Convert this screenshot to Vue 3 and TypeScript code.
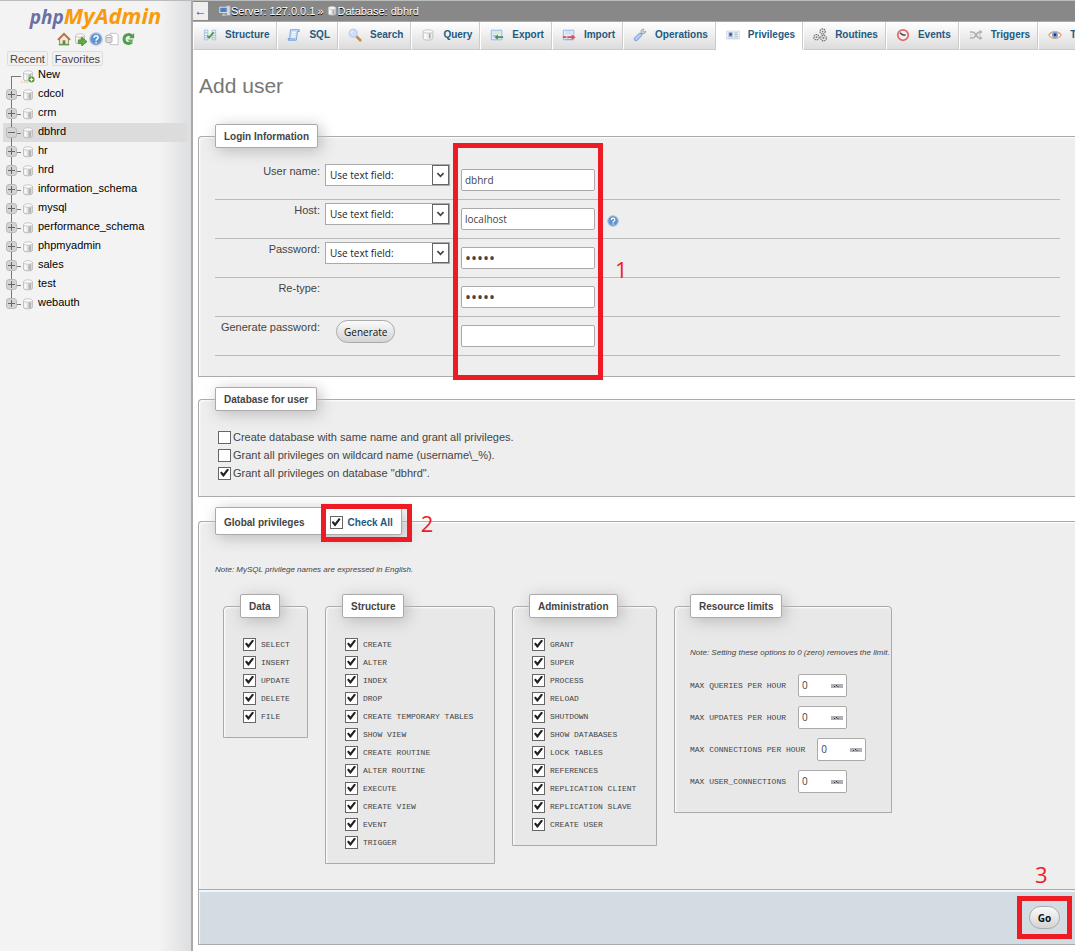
<script setup lang="ts">
import { reactive, ref, computed } from 'vue'

const db = `<path d="M3 4v8c0 2 10 2 10 0V4z" fill="#e4e4e4" stroke="#b5b5b5"/><path d="M8.5 5.500h3v7h-3z" fill="#b4b4b4"/><path d="M4 5h2v7H4z" fill="#fff"/><ellipse cx="8" cy="4" rx="5" ry="2" fill="#fafafa" stroke="#c4c4c4"/>`

const icons: Record<string, string> = {
  db,
  dbNew: db + `<circle cx="12" cy="12" r="3.500" fill="#5c9a3c"/><path d="M12 10v4M10 12h4" stroke="#fff" stroke-width="1.400"/><path d="M0 15h8" stroke="#e8c46a" stroke-dasharray="2 1"/>`,
  home: `<path d="M3 8v6h10V8L8 3z" fill="#f3ead8" stroke="#8d7b5c"/><path d="M1 9l7-7 7 7" fill="none" stroke="#b5733a" stroke-width="2"/><path d="M6.500 9.500h3V14h-3z" fill="#6b7b5a"/><path d="M2 14.500h12" stroke="#5b9a45" stroke-width="1.500"/>`,
  exit: db + `<path d="M6 9h4V6l6 5-6 5v-3H6z" fill="#62ad3b" stroke="#3c7a22" stroke-width=".8"/>`,
  help: `<circle cx="8" cy="8" r="7" fill="#5f94cf" stroke="#a9c3e2" stroke-width="1.500"/><path d="M5.800 6.500c0-3 4.600-3 4.600 0 0 1.700-2.300 1.500-2.300 3.400" fill="none" stroke="#fff" stroke-width="1.700"/><circle cx="8.100" cy="12" r="1" fill="#fff"/>`,
  docs: `<path d="M6 1.500h7l2 2v11H6z" fill="#fff" stroke="#bbb"/><path d="M1 5v6c0 1.500 7 1.500 7 0V5z" fill="#ddd" stroke="#aaa"/><ellipse cx="4.500" cy="5" rx="3.500" ry="1.500" fill="#f5f5f5" stroke="#aaa"/>`,
  reload: `<path d="M12.500 4.500c-3-3-9-1.500-9 3.500s5 6.500 9 3.500" fill="none" stroke="#4f9f4b" stroke-width="3.400"/><path d="M15 1v6H9z" fill="#4f9f4b"/><path d="M7 8.500h7l-2 5z" fill="#66b05e"/>`,
  server: `<path d="M10 1h5v13h-5z" fill="#d7d7d7" stroke="#999"/><path d="M1 3h10v7H1z" fill="#4e7fc4" stroke="#d5dce6" stroke-width="1.400"/><path d="M4 13.500h5M6.500 11v2" stroke="#ccc" stroke-width="1.500"/>`,
  structure: `<path d="M1.500 2.500h4v11h-4zM10.500 2.500h4v11h-4z" fill="#e8f1fb" stroke="#9dbfdf"/><path d="M1.500 5.500h4M1.500 8.500h4M1.500 11h4M10.500 5.500h4M10.500 8.500h4M10.500 11h4" stroke="#9dbfdf"/><path d="M5 9l2 2 5-6" fill="none" stroke="#4f9a42" stroke-width="2"/>`,
  sql: `<path d="M4 2h10v2h-2l-1.500 10H1.500v-2H3z" fill="#cfe3f8" stroke="#6b9dd6"/><path d="M6 5h4M5.600 7.500h4M5.300 10h4" stroke="#fff"/><path d="M1.500 12.500h8" stroke="#6b9dd6"/>`,
  search: `<path d="M9 9l5 5" stroke="#c98743" stroke-width="3" stroke-linecap="round"/><circle cx="6" cy="6" r="4.500" fill="#c9e0f8" stroke="#b9cbe2" stroke-width="1.300"/><path d="M3.500 6c0-1.500 1-2.500 2.500-2.500" stroke="#fff" fill="none"/>`,
  query: `<path d="M2.500 3.500v8.500c0 2.500 11 2.500 11 0V3.500z" fill="#efefef" stroke="#bbb"/><path d="M9 6h2v6H9z" fill="#aaa"/><path d="M4 5.500h2v7H4z" fill="#fff"/><ellipse cx="8" cy="4" rx="5.500" ry="2" fill="#f8f8f8" stroke="#c4c4c4"/>`,
  export: `<path d="M1.500 2.500h12v11h-12z" fill="#dfeafa" stroke="#8fb2e0"/><path d="M4 3.500h7V7H4z" fill="#d9ecc5"/><path d="M3 9h4" stroke="#7ba3d8"/><path d="M15 9.500H9V7.500L5 10.500l4 3v-2h6z" fill="#4f9050"/>`,
  import: `<path d="M1.500 2.500h12v11h-12z" fill="#dfeafa" stroke="#8fb2e0"/><path d="M4 3.500h7V7H4z" fill="#cfe0f3"/><path d="M4 13h8" stroke="#7ba3d8"/><path d="M1 9.500h4v2H1zM6 9.500h5V7.500l4.500 3-4.500 3v-2H6z" fill="#e8474b"/>`,
  wrench: `<path d="M3.500 12.500L8 8" stroke="#7da4dd" stroke-width="5" stroke-linecap="round"/><path d="M3.500 12.500L8 8" stroke="#b3cbf2" stroke-width="3" stroke-linecap="round"/><path d="M9 7l2-2" stroke="#999" stroke-width="2.500"/><path d="M9.500 2.500c-1 2 0 4 2 4s3-1 3-3l-2 1.300-1.500-1.500L12.500 1.500c-1 0-2.300 0-3 1z" fill="#d8d8d8" stroke="#999"/>`,
  card: `<path d="M.5 3.500h15v9H.5z" fill="#eef2f7" stroke="#d4d9e0"/><path d="M3 5h4.500v5H3z" fill="#6f9fdb"/><path d="M4.200 6h2v2.500h-2z" fill="#39435a"/><path d="M9.500 5.500h4M9.500 7.500h4M9.500 9.500h4" stroke="#a8b4c4"/><path d="M2 11.500h12" stroke="#bcc7d4"/>`,
  gears: `<g fill="#eee" stroke="#777" stroke-width="1.400" stroke-dasharray="1.800 .7"><circle cx="4" cy="10.500" r="3"/><circle cx="11" cy="4" r="3"/><circle cx="12" cy="11.500" r="3.200"/></g><g fill="#777"><circle cx="4" cy="10.500" r="1"/><circle cx="11" cy="4" r="1"/><circle cx="12" cy="11.500" r="1.100"/></g>`,
  clock: `<circle cx="8" cy="8" r="6" fill="#f4eeee" stroke="#e26a6a" stroke-width="2"/><path d="M4.500 5.500L8 8h3" fill="none" stroke="#444" stroke-width="1.600"/>`,
  triggers: `<path d="M1 4.500h3c4 0 4 7 8 7h2M1 11.500h3c4 0 4-7 8-7h2" fill="none" stroke="#b0b0aa" stroke-width="1.800"/><path d="M12 2l3.500 2.500L12 7zM12 9l3.500 2.500L12 14z" fill="#b0b0aa"/><path d="M1 8h3M11 8h3" stroke="#bbb"/>`,
  eye: `<path d="M1 8c3-5 11-5 14 0-3 5-11 5-14 0z" fill="#fff" stroke="#e0a578" stroke-width="1.500"/><circle cx="8" cy="8" r="3.400" fill="#6a9be8"/><circle cx="8" cy="7.700" r="1.400" fill="#23355c"/>`,
}

const shortcuts = [
  { icon: 'home', label: 'Home' },
  { icon: 'exit', label: 'Log out' },
  { icon: 'help', label: 'Documentation' },
  { icon: 'docs', label: 'Manual' },
  { icon: 'reload', label: 'Reload' },
]

const databases = ['cdcol', 'crm', 'dbhrd', 'hr', 'hrd', 'information_schema', 'mysql', 'performance_schema', 'phpmyadmin', 'sales', 'test', 'webauth']
const current = 'dbhrd'

const tabs = [
  { label: 'Structure', icon: 'structure' },
  { label: 'SQL', icon: 'sql' },
  { label: 'Search', icon: 'search' },
  { label: 'Query', icon: 'query' },
  { label: 'Export', icon: 'export' },
  { label: 'Import', icon: 'import' },
  { label: 'Operations', icon: 'wrench' },
  { label: 'Privileges', icon: 'card' },
  { label: 'Routines', icon: 'gears' },
  { label: 'Events', icon: 'clock' },
  { label: 'Triggers', icon: 'triggers' },
  { label: 'Tracking', icon: 'eye' },
]
const activeTab = ref('Privileges')

const login = reactive([
  { id: 'user', label: 'User name:', control: 'select', type: 'text', value: 'dbhrd', help: false },
  { id: 'host', label: 'Host:', control: 'select', type: 'text', value: 'localhost', help: true },
  { id: 'pass', label: 'Password:', control: 'select', type: 'password', value: 'dbhrd', help: false },
  { id: 'retype', label: 'Re-type:', control: 'none', type: 'password', value: 'dbhrd', help: false },
  { id: 'generated', label: 'Generate password:', control: 'button', type: 'text', value: '', help: false },
])

const dbOptions = reactive([
  { label: 'Create database with same name and grant all privileges.', on: false },
  { label: 'Grant all privileges on wildcard name (username\\_%).', on: false },
  { label: 'Grant all privileges on database "dbhrd".', on: true },
])

const makeGroup = (title: string, names: string[]) => ({ title, items: names.map((name) => ({ name, on: true })) })
const groups = reactive([
  makeGroup('Data', ['SELECT', 'INSERT', 'UPDATE', 'DELETE', 'FILE']),
  makeGroup('Structure', ['CREATE', 'ALTER', 'INDEX', 'DROP', 'CREATE TEMPORARY TABLES', 'SHOW VIEW', 'CREATE ROUTINE', 'ALTER ROUTINE', 'EXECUTE', 'CREATE VIEW', 'EVENT', 'TRIGGER']),
  makeGroup('Administration', ['GRANT', 'SUPER', 'PROCESS', 'RELOAD', 'SHUTDOWN', 'SHOW DATABASES', 'LOCK TABLES', 'REFERENCES', 'REPLICATION CLIENT', 'REPLICATION SLAVE', 'CREATE USER']),
])
const checkAll = computed({
  get: () => groups.every((g) => g.items.every((i) => i.on)),
  set: (on: boolean) => groups.forEach((g) => g.items.forEach((i) => (i.on = on))),
})

const limits = reactive([
  { label: 'MAX QUERIES PER HOUR', value: 0 },
  { label: 'MAX UPDATES PER HOUR', value: 0 },
  { label: 'MAX CONNECTIONS PER HOUR', value: 0 },
  { label: 'MAX USER_CONNECTIONS', value: 0 },
])
</script>

<template>
  <div class="page">
    <aside class="sidebar">
      <a class="logo" href="#"><span class="logo-php">php</span><span class="logo-my">MyAdmin</span></a>
      <nav class="shortcuts">
        <a v-for="s in shortcuts" :key="s.icon" href="#" :aria-label="s.label">
          <svg viewBox="0 0 16 16" v-html="icons[s.icon]"></svg>
        </a>
      </nav>
      <div class="quick">
        <button type="button">Recent</button>
        <button type="button">Favorites</button>
      </div>
      <ul class="tree">
        <li class="node first">
          <span class="branch"></span>
          <svg class="node-icon" viewBox="0 0 16 16" v-html="icons.dbNew"></svg>
          <a href="#">New</a>
        </li>
        <li v-for="name in databases" :key="name" class="node" :class="{ current: name === current }">
          <span class="branch"><button type="button" class="toggle" :class="{ open: name === current }" :aria-label="'Toggle ' + name"></button></span>
          <svg class="node-icon" viewBox="0 0 16 16" v-html="icons.db"></svg>
          <a href="#">{{ name }}</a>
        </li>
      </ul>
    </aside>

    <main class="main">
      <header class="crumbs">
        <button type="button" class="collapse" aria-label="Hide panel">←</button>
        <svg viewBox="0 0 16 16" v-html="icons.server"></svg>
        <a href="#">Server: 127.0.0.1</a>
        <span class="sep">»</span>
        <svg viewBox="0 0 16 16" v-html="icons.db"></svg>
        <a href="#">Database: dbhrd</a>
      </header>

      <nav class="tabs">
        <a v-for="t in tabs" :key="t.label" href="#" class="tab" :class="{ active: t.label === activeTab }" @click.prevent="activeTab = t.label">
          <svg viewBox="0 0 16 16" v-html="icons[t.icon]"></svg>
          <span>{{ t.label }}</span>
        </a>
      </nav>

      <form class="content" @submit.prevent>
        <h2>Add user</h2>

        <fieldset class="box login">
          <legend>Login Information</legend>
          <div v-for="row in login" :key="row.id" class="row">
            <label :for="row.id">{{ row.label }}</label>
            <div class="mode">
              <div v-if="row.control === 'select'" class="select">
                <select :aria-label="row.label + ' type'">
                  <option>Use text field:</option>
                </select>
                <svg viewBox="0 0 17 20"><path d="M5 8l3.500 3.500L12 8" fill="none" stroke="#444" stroke-width="2" /></svg>
              </div>
              <button v-else-if="row.control === 'button'" type="button" class="pill generate">Generate</button>
            </div>
            <input :id="row.id" v-model="row.value" :type="row.type" class="field" />
            <svg v-if="row.help" class="help" viewBox="0 0 16 16" v-html="icons.help"></svg>
          </div>
          <div class="mark mark-fields"></div>
          <span class="step step-one">1</span>
        </fieldset>

        <fieldset class="box database">
          <legend>Database for user</legend>
          <label v-for="o in dbOptions" :key="o.label" class="option">
            <input v-model="o.on" type="checkbox" /><span>{{ o.label }}</span>
          </label>
        </fieldset>

        <fieldset class="box global">
          <legend class="global-legend">
            <span>Global privileges</span>
            <label class="all">
              <input v-model="checkAll" type="checkbox" /><span>Check All</span>
              <span class="mark mark-all"></span>
              <span class="step step-two">2</span>
            </label>
          </legend>
          <p class="note">Note: MySQL privilege names are expressed in English.</p>
          <div class="groups">
            <fieldset v-for="g in groups" :key="g.title" class="box group">
              <legend>{{ g.title }}</legend>
              <label v-for="i in g.items" :key="i.name" class="privilege">
                <input v-model="i.on" type="checkbox" /><code>{{ i.name }}</code>
              </label>
            </fieldset>
            <fieldset class="box group limits">
              <legend>Resource limits</legend>
              <p class="note">Note: Setting these options to 0 (zero) removes the limit.</p>
              <label v-for="l in limits" :key="l.label" class="limit">
                <code>{{ l.label }}</code>
                <span class="number">
                  <input v-model="l.value" type="number" min="0" />
                  <svg viewBox="0 0 12 4"><path d="M0 0h12v4H0z" fill="#b0b0b6" /><path d="M3 2.500h1M5 1.500h1M6.500 2.500h1" stroke="#333" /></svg>
                </span>
              </label>
            </fieldset>
          </div>
        </fieldset>

        <footer class="submit">
          <div class="go-wrap">
            <button type="submit" class="pill go">Go</button>
            <span class="mark mark-go"></span>
            <span class="step step-three">3</span>
          </div>
        </footer>
      </form>
    </main>
  </div>
</template>

<style>
html,
body {
  margin: 0;
  background: #fff;
}
</style>

<style scoped>
.page,
.page * {
  box-sizing: border-box;
}
.page {
  display: flex;
  min-height: 100vh;
  border-top: 1px solid #bbb;
  font-family: "Liberation Sans", Arial, sans-serif;
  font-size: 11px;
  line-height: 14px;
  color: #444;
  overflow: hidden;
}
a {
  color: inherit;
  text-decoration: none;
}
button,
input,
select {
  margin: 0;
  font: inherit;
  color: inherit;
}
svg {
  display: block;
  flex: none;
}

/* Navigation panel */
.sidebar {
  flex: none;
  width: 193px;
  border-right: 2px solid #aaa;
  background: linear-gradient(to right, #f3f3f3 160px, #dcdee0);
}
.logo {
  display: flex;
  align-items: baseline;
  justify-content: center;
  height: 30px;
  font-family: "Open Sans", sans-serif;
  font-weight: 700;
  font-style: italic;
  font-size: 22px;
  line-height: 28px;
}
.logo-php {
  font-size: 19px;
  color: #6c6fa5;
}
.logo-my {
  color: #f89a0c;
}
.shortcuts {
  display: flex;
  justify-content: center;
  gap: 2px;
  padding-top: 1px;
}
.shortcuts svg {
  width: 14px;
  height: 14px;
}
.quick {
  display: flex;
  gap: 4px;
  padding: 5px 0 0 7px;
}
.quick button {
  height: 15px;
  padding: 0 2px;
  border: 1px solid #ddd;
  border-radius: 2px;
  background: #f1f1f1;
  line-height: 12px;
}
.tree {
  margin: 0;
  padding: 0 4px 0 3px;
  list-style: none;
  color: #000;
}
.node {
  display: flex;
  align-items: center;
  height: 19px;
}
.node.current {
  background: #dcdcdc;
}
.branch {
  display: flex;
  align-items: center;
  position: relative;
  width: 18px;
  height: 19px;
  padding-left: 3px;
}
.branch::before {
  content: "";
  position: absolute;
  left: 8px;
  top: 0;
  bottom: 0;
  border-left: 1px solid #777;
}
.branch::after {
  content: "";
  position: absolute;
  left: 8px;
  top: 10px;
  width: 10px;
  border-top: 1px solid #777;
}
.first .branch::before {
  top: 10px;
}
.node:last-child .branch::before {
  bottom: 10px;
}
.toggle {
  position: relative;
  z-index: 1;
  width: 11px;
  height: 11px;
  padding: 0;
  border: 1px solid #bbb;
  border-radius: 3px;
  background: linear-gradient(#666, #666) center / 7px 1px no-repeat, linear-gradient(#666, #666) center / 1px 7px no-repeat, #d4d4d4;
}
.toggle.open {
  background: linear-gradient(#666, #666) center / 7px 1px no-repeat, #d4d4d4;
}
.node-icon {
  width: 14px;
  height: 14px;
}
.node a {
  padding: 0 0 4px 3px;
}

/* Breadcrumbs and tabs */
.main {
  flex: 1;
  min-width: 0;
}
.crumbs {
  display: flex;
  align-items: center;
  height: 21px;
  border-bottom: 1px solid #aaa;
  background: #888;
  color: #fff;
  text-shadow: 0 1px 0 #000;
}
.crumbs svg {
  width: 12px;
  height: 12px;
}
.collapse {
  width: 15px;
  height: 18px;
  margin-right: 11px;
  padding: 0;
  border: 0;
  background: #eee;
  color: #444;
  font-size: 12px;
  line-height: 16px;
}
.sep {
  margin: 0 2px;
}
.tabs {
  display: flex;
  height: 28px;
  overflow: hidden;
}
.tab {
  display: flex;
  flex: none;
  align-items: center;
  gap: 8px;
  padding: 0 7px 1px 9px;
  border-right: 1px solid #ccc;
  border-bottom: 1px solid #ccc;
  border-left: 1px solid #fff;
  background: linear-gradient(#fff, #dcdcdc);
  font-size: 10px;
  font-weight: 700;
  color: #235a81;
}
.tab svg {
  width: 14px;
  height: 14px;
}
.tab.active {
  background: #fff;
  border-bottom-color: #fff;
}

/* Form */
.content {
  padding: 24px 0 6px 5px;
}
h2 {
  margin: 0 0 26px 1px;
  font-size: 21px;
  line-height: 24px;
  font-weight: 400;
  color: #777;
}
.box {
  position: relative;
  min-width: 0;
  margin: 0 0 10px;
  padding: 0 15px 14px 16px;
  border: 1px solid #aaa;
  border-right: 0;
  border-radius: 4px 0 0 0;
  background: #eee;
  box-shadow: inset 1px 1px 2px #fff;
}
legend {
  height: 24px;
  padding: 1px 8px 0;
  border: 1px solid #aaa;
  border-radius: 2px;
  background: #fff;
  box-shadow: 3px 3px 15px #bbb;
  font-size: 10px;
  line-height: 22px;
  font-weight: 700;
}
.box.login {
  padding-bottom: 20px;
}
.row {
  display: grid;
  grid-template-columns: 105px 125px 134px auto;
  column-gap: 5px;
  align-items: start;
  height: 39px;
  border-bottom: 1px solid #bbb;
}
legend + .row {
  height: 52px;
  padding-top: 13px;
}
.row label {
  padding-top: 3px;
  text-align: right;
}
.mode {
  padding-top: 3px;
}
.select {
  display: flex;
  position: relative;
  height: 22px;
  border: 1px solid #aaa;
  background: #fff;
  font-family: "Open Sans", sans-serif;
  font-size: 10px;
}
.select select {
  flex: 1;
  width: 100%;
  padding: 0 18px 0 4px;
  border: 0;
  background: none;
  appearance: none;
  color: #222;
}
.select svg {
  position: absolute;
  top: 0;
  right: 0;
  width: 17px;
  height: 20px;
  border: 1px solid #666;
  background: #fff;
  pointer-events: none;
}
.field {
  width: 134px;
  height: 22px;
  margin: 8px 0 0 6px;
  padding: 0 3px;
  border: 1px solid #aaa;
  border-radius: 2px;
  background: #fff;
  font-family: "Open Sans", sans-serif;
  font-size: 10px;
}
.field[type="password"] {
  font-size: 16px;
}
.help {
  width: 12px;
  height: 12px;
  margin: 15px 0 0 13px;
}
.pill {
  height: 23px;
  border: 1px solid #aaa;
  border-radius: 12px;
  background: linear-gradient(#fafafa, #d4d4d4);
  font-family: "Open Sans", sans-serif;
  font-size: 10px;
  color: #111;
  line-height: 18px;
}
.generate {
  margin-left: 11px;
  padding: 0 7px;
}
input[type="checkbox"] {
  position: relative;
  flex: none;
  width: 13px;
  height: 13px;
  border: 1px solid #666;
  background: #fff;
  appearance: none;
}
input[type="checkbox"]:checked::after {
  content: "";
  position: absolute;
  inset: 1px;
  background: #222;
  clip-path: polygon(0 48%, 18% 34%, 38% 56%, 82% 0, 100% 14%, 42% 92%, 34% 92%);
}
.option {
  display: flex;
  align-items: center;
  gap: 2px;
  width: fit-content;
  height: 18px;
  margin-left: 3px;
}
.database legend {
  margin-bottom: 17px;
}
.global {
  margin-bottom: 0;
  padding-bottom: 25px;
}
.global-legend {
  display: flex;
  align-items: center;
  gap: 25px;
  height: 28px;
  padding-top: 3px;
}
.all {
  display: flex;
  position: relative;
  align-items: center;
  gap: 5px;
  color: #235a81;
}
.note {
  margin: 0;
  font-size: 8px;
  line-height: 12px;
  font-style: italic;
  white-space: nowrap;
}
.global > .note {
  padding: 29px 0 18px;
}
.groups {
  display: flex;
  align-items: flex-start;
  gap: 17px;
  margin-left: 8px;
}
.group {
  flex: none;
  width: 85px;
  margin: 0;
  padding: 0 16px 12px;
  border-right: 1px solid #aaa;
  border-radius: 4px 4px 0 0;
  background: #e8e8e8;
}
.group:nth-child(2) {
  width: 170px;
}
.group:nth-child(3) {
  width: 145px;
}
.group legend {
  margin-bottom: 17px;
}
.privilege {
  display: flex;
  align-items: center;
  gap: 5px;
  height: 18px;
  margin-left: 3px;
}
code {
  font-family: "Liberation Mono", monospace;
  font-size: 8px;
  white-space: nowrap;
}
.privilege code {
  padding-top: 2px;
}
.group.limits {
  width: 218px;
  padding: 0 0 15px 15px;
}
.limits .note {
  padding: 12px 0 10px;
}
.limit {
  display: flex;
  align-items: center;
  gap: 12px;
  height: 32px;
}
.limit code {
  padding-top: 2px;
}
.number {
  display: flex;
  position: relative;
  width: 49px;
}
.number input {
  width: 100%;
  height: 23px;
  padding: 0 3px;
  border: 1px solid #aaa;
  border-radius: 2px;
  background: #fff;
  font-family: "Open Sans", sans-serif;
  font-size: 10px;
  appearance: textfield;
}
.number svg {
  position: absolute;
  top: 10px;
  right: 4px;
  width: 12px;
  height: 4px;
}
.submit {
  display: flex;
  align-items: center;
  justify-content: flex-end;
  height: 55px;
  padding: 1px 15px 0 0;
  border: 1px solid #aaa;
  border-top: 0;
  border-right: 0;
  background: #d3dce3;
  box-shadow: inset 1px 2px 1px #f4f6f8;
}
.go-wrap {
  position: relative;
}
.go {
  display: block;
  width: 31px;
  padding: 0;
  font-weight: 700;
}

/* Numbered callouts */
.mark {
  position: absolute;
  border: 5px solid #ed1c24;
  pointer-events: none;
}
.step {
  position: absolute;
  font-family: "Open Sans", sans-serif;
  font-size: 22px;
  line-height: 24px;
  font-weight: 400;
  color: #ed1c24;
}
.mark-fields {
  top: -5px;
  bottom: -4px;
  left: 254px;
  width: 150px;
}
.step-one {
  top: 109px;
  left: 416px;
}
.mark-all {
  inset: -8px -19px -8px -9px;
}
.step-two {
  left: 100%;
  margin-left: 28px;
}
.mark-go {
  inset: -10px -12px;
}
.step-three {
  bottom: 43px;
  left: 6px;
}
</style>
